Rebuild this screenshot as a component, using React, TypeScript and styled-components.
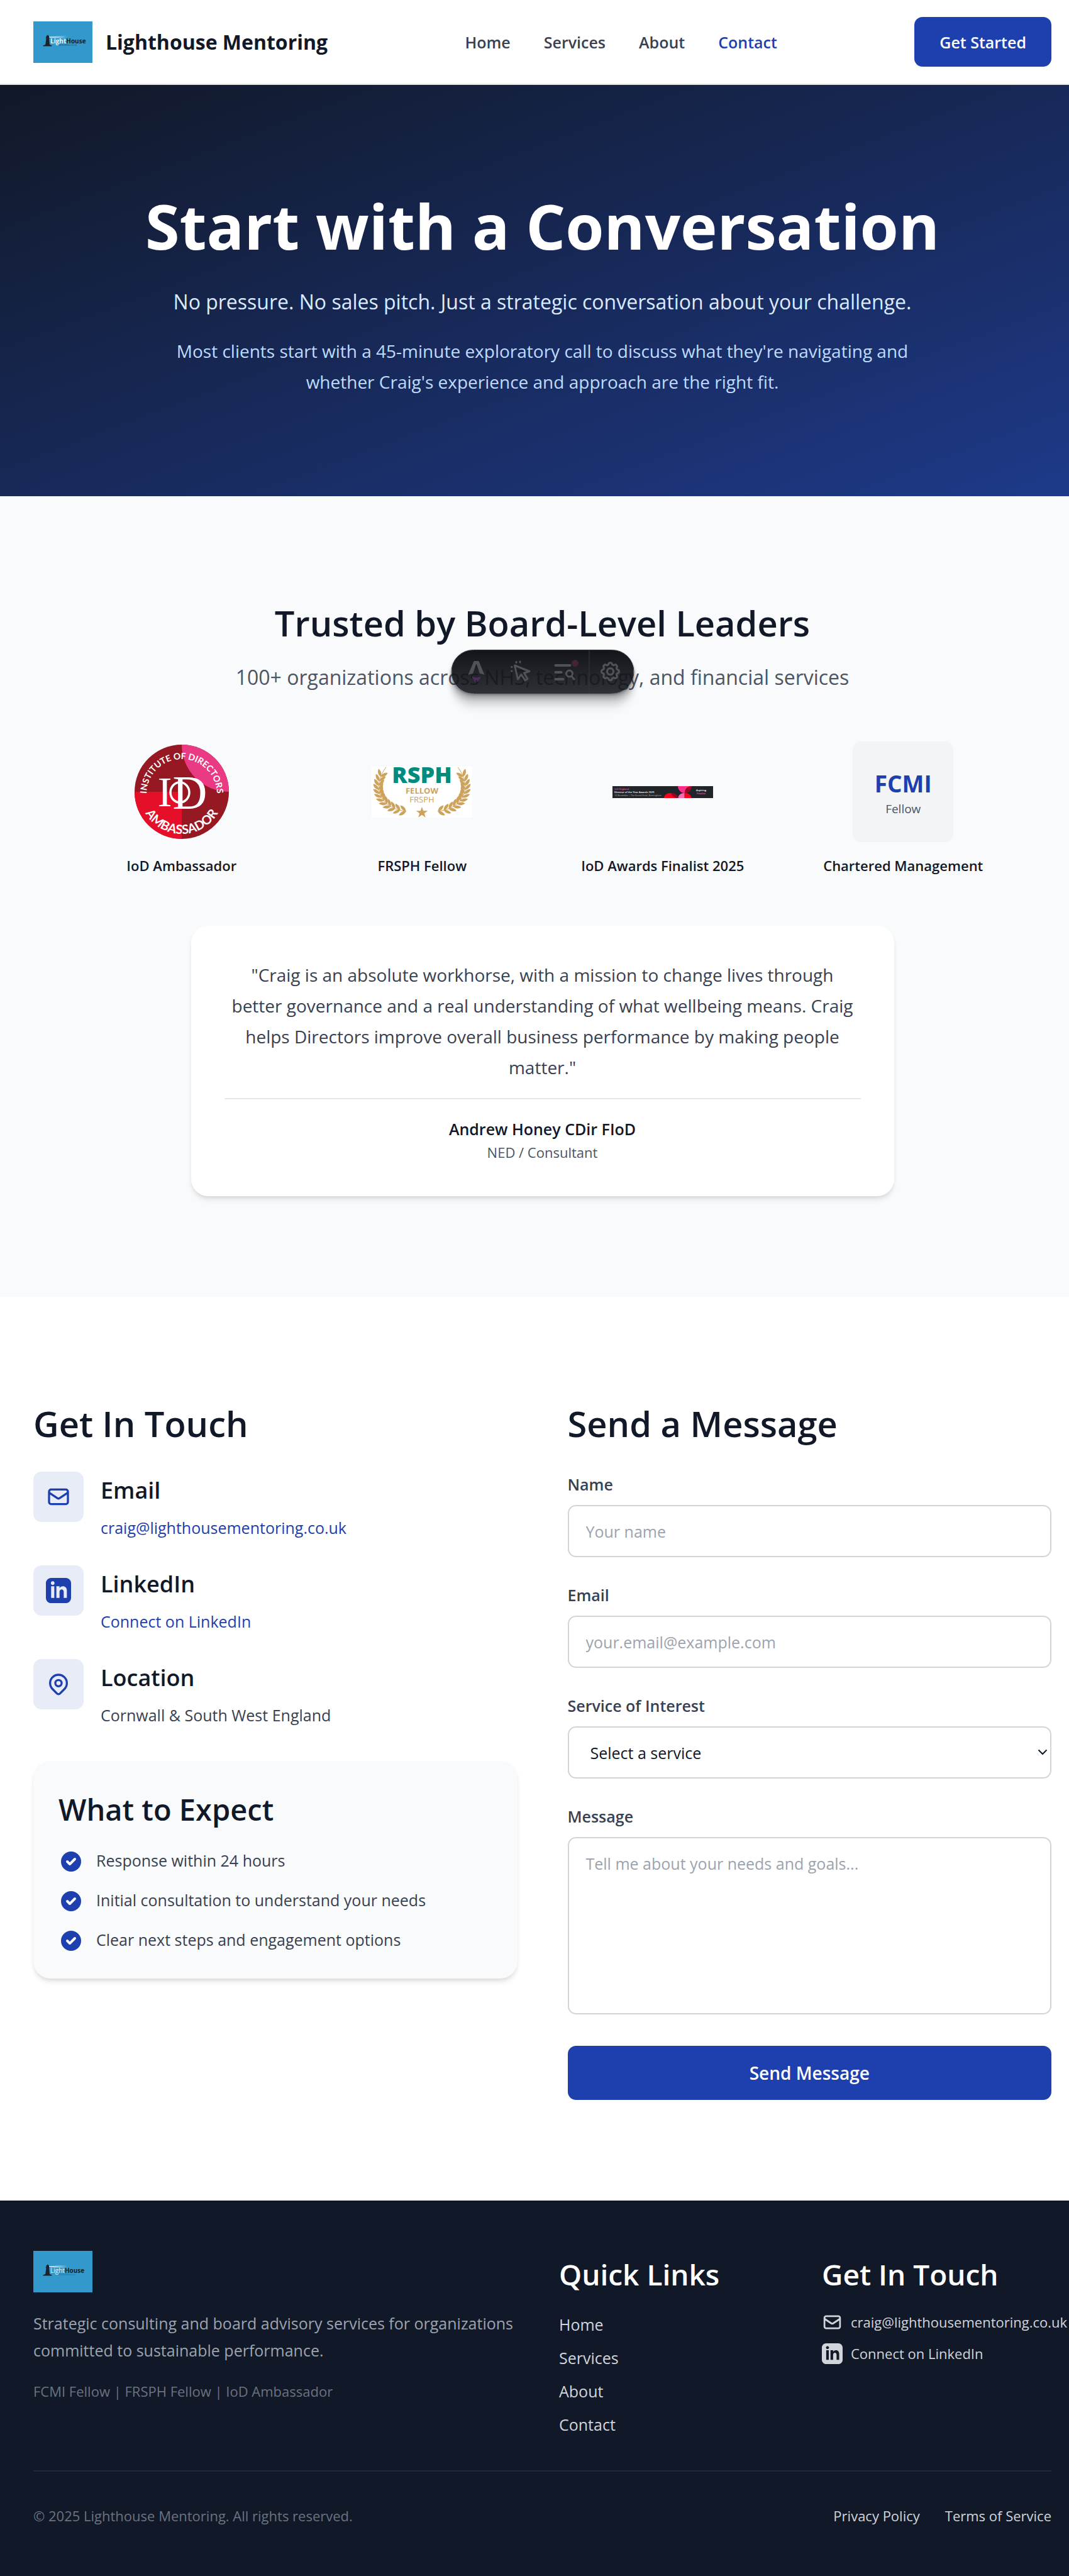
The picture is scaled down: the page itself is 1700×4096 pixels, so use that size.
import React from "react";
import styled, { createGlobalStyle } from "styled-components";

const c = {
  ink: "#111827",
  slate: "#374151",
  muted: "#4b5563",
  line: "#e5e7eb",
  field: "#d1d5db",
  hint: "#9ca3af",
  dim: "#6b7280",
  brand: "#1e40af",
  tint: "#e8ecf7",
  soft: "#f9fafb",
  gold: "#cda25a",
};

const font = `"Open Sans", "Segoe UI", sans-serif`;
const cardShadow = "0 7px 10px -2px rgba(0,0,0,0.1), 0 3px 7px -3px rgba(0,0,0,0.1)";

const GlobalStyle = createGlobalStyle`
  *, *::before, *::after { box-sizing: border-box; }
  html { overflow-x: hidden; }
  body { margin: 0; overflow-x: hidden; background: #fff; color: ${c.ink}; font-family: ${font}; font-size: 25px; line-height: 40px; }
  h1, h2, h3, p, ul, figure, blockquote { margin: 0; padding: 0; }
  ul { list-style: none; }
  a { color: inherit; text-decoration: none; }
  button, input, select, textarea { font: inherit; }
  svg { display: block; flex-shrink: 0; overflow: visible; }
`;

const Band = styled.div`
  padding-left: 53px;
  padding-right: 28px;
`;

/* Header */
const Header = styled(Band).attrs({ as: "header" })`
  display: flex;
  align-items: center;
  justify-content: space-between;
  padding-top: 27px;
  padding-bottom: 27px;
  border-bottom: 2px solid ${c.line};
`;
const Brand = styled.a`
  display: flex;
  align-items: center;
  gap: 21px;
  font-size: 32px;
  font-weight: 700;
`;
const Nav = styled.nav`
  display: flex;
  gap: 53px;
`;
const NavLink = styled.a<{ $active?: boolean }>`
  font-weight: 600;
  color: ${(p) => (p.$active ? c.brand : c.slate)};
`;
const Cta = styled.button`
  height: 79px;
  padding: 0 40px;
  border: 0;
  border-radius: 13px;
  background: ${c.brand};
  color: #fff;
  font-weight: 600;
`;

/* Hero */
const Hero = styled(Band).attrs({ as: "section" })`
  padding-top: 160px;
  padding-bottom: 157px;
  text-align: center;
  background: linear-gradient(to bottom right, ${c.ink}, #1e3a8a) 0 0 / calc(100% + 25px) 100%;
`;
const HeroTitle = styled.h1`
  font-size: 99px;
  line-height: 128px;
  font-weight: 700;
  color: #fff;
`;
const HeroLead = styled.p`
  margin-top: 33px;
  font-size: 32px;
  line-height: 48px;
  color: #dbeafe;
`;
const HeroText = styled.p`
  max-width: 1277px;
  margin: 30px auto 0;
  font-size: 28px;
  line-height: 49px;
  color: #bfdbfe;
`;

/* Trust section */
const Trust = styled(Band).attrs({ as: "section" })`
  padding-top: 159px;
  padding-bottom: 160px;
  background: ${c.soft};
`;
const TrustHead = styled.div`
  position: relative;
  text-align: center;
`;
const SectionTitle = styled.h2`
  font-size: 56px;
  line-height: 84px;
  font-weight: 600;
`;
const TrustLead = styled.p`
  margin-top: 21px;
  font-size: 32px;
  line-height: 48px;
  color: ${c.muted};
`;
const Toolbar = styled.div`
  position: absolute;
  top: 85px;
  left: 50%;
  transform: translateX(-50%);
  display: grid;
  grid-template-columns: 71px 71px 72px 67px;
  width: 291px;
  height: 70px;
  padding: 0 4px;
  border: 1px solid #343841;
  border-radius: 35px;
  background: linear-gradient(180deg, #13151a 0%, rgba(19, 21, 26, 0.88) 100%);
  box-shadow: 0 2px 3px rgba(19, 21, 26, 0.29), 0 7px 7px rgba(19, 21, 26, 0.26),
    0 17px 10px rgba(19, 21, 26, 0.15), 0 28px 12px rgba(19, 21, 26, 0.04);
`;
const Tool = styled.button<{ $divided?: boolean }>`
  display: grid;
  place-items: center;
  padding: 0;
  border: 0;
  border-left: ${(p) => (p.$divided ? "1px solid #343841" : "0")};
  background: none;
  color: #505257;
`;
const Badges = styled.div`
  display: grid;
  grid-template-columns: repeat(4, 1fr);
  gap: 40px;
  max-width: 1490px;
  margin: 78px auto 0;
`;
const Badge = styled.figure`
  display: flex;
  flex-direction: column;
  align-items: center;
  gap: 21px;
`;
const BadgeArt = styled.div`
  display: grid;
  place-items: center;
  width: 160px;
  height: 160px;
`;
const BadgeName = styled.figcaption`
  font-size: 22px;
  line-height: 32px;
  font-weight: 600;
  white-space: nowrap;
`;
const Fcmi = styled(BadgeArt)`
  align-content: center;
  border-radius: 13px;
  background: #f3f4f6;
`;
const FcmiName = styled.strong`
  font-size: 37px;
  line-height: 54px;
  font-weight: 700;
  color: ${c.brand};
`;
const FcmiRole = styled.span`
  font-size: 19px;
  line-height: 27px;
  color: ${c.muted};
`;
const Quote = styled.figure`
  max-width: 1118px;
  margin: 80px auto 0;
  padding: 54px 53px 53px;
  border-radius: 27px;
  background: #fff;
  text-align: center;
  box-shadow: ${cardShadow};
`;
const QuoteText = styled.blockquote`
  margin: 0;
  font-size: 28px;
  line-height: 49px;
  color: ${c.slate};
`;
const QuoteBy = styled.figcaption`
  display: flex;
  flex-direction: column;
  margin-top: 24px;
  padding-top: 27px;
  border-top: 2px solid ${c.line};
`;
const QuoteName = styled.span`
  font-weight: 600;
`;
const QuoteRole = styled.span`
  font-size: 22px;
  line-height: 34px;
  color: ${c.muted};
`;

/* Contact section */
const Contact = styled(Band).attrs({ as: "section" })`
  display: grid;
  grid-template-columns: repeat(2, 1fr);
  gap: 80px;
  padding-top: 159px;
  padding-bottom: 160px;
`;
const Stack = styled.div`
  display: flex;
  flex-direction: column;
  gap: 35px;
`;
const Methods = styled.div`
  display: flex;
  flex-direction: column;
  gap: 38px;
`;
const Method = styled.div`
  display: flex;
  gap: 27px;
`;
const MethodIcon = styled.div`
  display: grid;
  place-items: center;
  width: 80px;
  height: 80px;
  border-radius: 13px;
  background: ${c.tint};
  color: ${c.brand};
`;
const MethodTitle = styled.h3`
  margin-bottom: 8px;
  font-size: 36px;
  line-height: 60px;
  font-weight: 600;
`;
const MethodText = styled.p`
  line-height: 43px;
  color: ${c.slate};
`;
const MethodLink = styled.a`
  display: block;
  line-height: 43px;
  color: ${c.brand};
`;
const Expect = styled.div`
  margin-top: 16px;
  padding: 40px;
  border-radius: 27px;
  background: ${c.soft};
  box-shadow: ${cardShadow};
`;
const ExpectTitle = styled.h3`
  font-size: 47px;
  line-height: 74px;
  font-weight: 600;
`;
const ExpectList = styled.ul`
  display: flex;
  flex-direction: column;
  gap: 20px;
  margin-top: 23px;
`;
const ExpectItem = styled.li`
  display: flex;
  align-items: flex-end;
  gap: 20px;
  line-height: 43px;
  color: ${c.slate};
`;
const Form = styled.form`
  display: flex;
  flex-direction: column;
  gap: 40px;
`;
const Field = styled.div`
  display: flex;
  flex-direction: column;
  gap: 13px;
`;
const Label = styled.label`
  font-weight: 600;
  color: ${c.slate};
`;
const control = `
  width: 100%;
  margin: 0;
  border: 2px solid ${c.field};
  border-radius: 13px;
  background: #fff;
  color: ${c.ink};
  outline: none;
  &::placeholder { color: ${c.hint}; opacity: 1; }
`;
const Input = styled.input`
  ${control}
  height: 83px;
  padding: 0 27px;
`;
const Area = styled.textarea`
  ${control}
  height: 282px;
  padding: 20px 27px;
  resize: none;
`;
const SelectWrap = styled.div`
  position: relative;
  & > svg { position: absolute; right: 6px; top: 34px; pointer-events: none; }
`;
const Select = styled.select`
  ${control}
  display: block;
  appearance: none;
  height: 83px;
  padding: 0 34px;
`;
const Submit = styled.button`
  height: 86px;
  margin-top: 10px;
  border: 0;
  border-radius: 13px;
  background: ${c.brand};
  color: #fff;
  font-size: 28px;
  font-weight: 600;
`;

/* Footer */
const Footer = styled(Band).attrs({ as: "footer" })`
  padding-top: 80px;
  padding-bottom: 80px;
  background: ${c.ink};
`;
const FooterGrid = styled.div`
  display: grid;
  grid-template-columns: repeat(4, minmax(0, 1fr));
  gap: 53px;
  & > :first-child { grid-column: span 2; }
`;
const About = styled.p`
  margin-top: 28px;
  line-height: 43px;
  color: ${c.hint};
`;
const Creds = styled.p`
  margin-top: 25px;
  font-size: 22px;
  line-height: 36px;
  color: ${c.dim};
`;
const FooterTitle = styled.h3`
  font-size: 46px;
  line-height: 74px;
  font-weight: 600;
  color: #fff;
`;
const LinkList = styled.ul<{ $gap: number }>`
  display: flex;
  flex-direction: column;
  gap: ${(p) => p.$gap}px;
  margin-top: 23px;
  color: ${c.field};
`;
const IconLink = styled.a`
  display: flex;
  align-items: center;
  gap: 13px;
  font-size: 22px;
  line-height: 33px;
  white-space: nowrap;
`;
const Legal = styled.div`
  display: flex;
  justify-content: space-between;
  margin-top: 53px;
  padding-top: 54px;
  border-top: 2px solid #1f2937;
  font-size: 22px;
  line-height: 32px;
  color: ${c.dim};
`;
const LegalLinks = styled.div`
  display: flex;
  gap: 40px;
  color: ${c.field};
`;

/* Icons */
const MailIcon = ({ size }: { size: number }) => (
  <svg width={size} height={size} viewBox="0 0 24 24" fill="none" stroke="currentColor" strokeWidth="2" strokeLinecap="round" strokeLinejoin="round" aria-hidden>
    <path d="M3 8l7.89 5.26a2 2 0 002.22 0L21 8M5 19h14a2 2 0 002-2V7a2 2 0 00-2-2H5a2 2 0 00-2 2v10a2 2 0 002 2z" />
  </svg>
);
const LinkedInIcon = ({ size }: { size: number }) => (
  <svg width={size} height={size} viewBox="0 0 24 24" fill="currentColor" aria-hidden>
    <path d="M19 0h-14c-2.761 0-5 2.239-5 5v14c0 2.761 2.239 5 5 5h14c2.762 0 5-2.239 5-5v-14c0-2.761-2.238-5-5-5zm-11 19h-3v-11h3v11zm-1.5-12.268c-.966 0-1.75-.79-1.75-1.764s.784-1.764 1.75-1.764 1.75.79 1.75 1.764-.783 1.764-1.75 1.764zm13.5 12.268h-3v-5.604c0-3.368-4-3.113-4 0v5.604h-3v-11h3v1.765c1.396-2.586 7-2.777 7 2.476v6.759z" />
  </svg>
);
const PinIcon = () => (
  <svg width="40" height="40" viewBox="0 0 24 24" fill="none" stroke="currentColor" strokeWidth="2" strokeLinecap="round" strokeLinejoin="round" aria-hidden>
    <path d="M17.657 16.657L13.414 20.9a1.998 1.998 0 01-2.827 0l-4.244-4.243a8 8 0 1111.314 0z" />
    <path d="M15 11a3 3 0 11-6 0 3 3 0 016 0z" />
  </svg>
);
const CheckIcon = () => (
  <svg width="40" height="40" viewBox="0 0 20 20" fill={c.brand} aria-hidden>
    <path fillRule="evenodd" clipRule="evenodd" d="M10 18a8 8 0 100-16 8 8 0 000 16zm3.707-9.293a1 1 0 00-1.414-1.414L9 10.586 7.707 9.293a1 1 0 00-1.414 1.414l2 2a1 1 0 001.414 0l4-4z" />
  </svg>
);
const ChevronIcon = () => (
  <svg width="16" height="14" viewBox="0 0 16 14" fill="none" stroke={c.ink} strokeWidth="2" aria-hidden>
    <path d="M1.500 3.500 8 10l6.500-6.500" />
  </svg>
);

/* Drawings */
const Logo = () => (
  <svg width="94" height="66" viewBox="0 0 94 66" role="img" aria-label="Lighthouse Mentoring logo">
    <defs>
      <linearGradient id="beam" x1="0" x2="1">
        <stop offset="0" stopColor="#fff" stopOpacity="0.9" />
        <stop offset="1" stopColor="#fff" stopOpacity="0" />
      </linearGradient>
    </defs>
    <rect width="94" height="66" fill="#3399cc" />
    <path d="M25 24.500 54 22.500v5L25 25.800z" fill="url(#beam)" />
    <path d="M15.500 39.500v-1.200l3.700-1.300L20.500 27h-.8v-1.200h.8v-2.300l2.300-2 2.200 2v2.300h.8V27H25l1 10 3.500 1.300v1.200z" fill="#1c2227" />
    <text y="35" x="27" fontFamily="Open Sans, sans-serif" fontSize="10" fill="#e8f4fb">
      Light<tspan fill="#1c2227" fontWeight="700">House</tspan>
    </text>
    <text x="40" y="39" fontFamily="Open Sans, sans-serif" fontSize="3" fill="#1f6a94">MENTORING.CO.UK</text>
  </svg>
);

const IodBadge = () => (
  <svg width="150" height="150" viewBox="0 0 150 150" role="img" aria-label="Institute of Directors Ambassador">
    <defs>
      <clipPath id="disc"><circle cx="75" cy="75" r="75" /></clipPath>
      <path id="arcTop" d="M19 79a56 56 0 0 1 112 0" />
      <path id="arcBottom" d="M8 75a67 67 0 0 0 134 0" />
    </defs>
    <g clipPath="url(#disc)">
      <rect width="150" height="150" fill="#951822" />
      <rect y="75" width="75" height="75" fill="#e50f29" />
      <circle cx="150" cy="0" r="75" fill="#ea3a83" />
    </g>
    <g fill="#fff" fontFamily="Lato, sans-serif" textAnchor="middle">
      <text fontSize="14" fontWeight="700"><textPath href="#arcTop" startOffset="50%">INSTITUTE OF DIRECTORS</textPath></text>
      <text fontSize="20" fontWeight="700"><textPath href="#arcBottom" startOffset="50%">AMBASSADOR</textPath></text>
      <text x="48" y="98" fontFamily="Liberation Serif, serif" fontSize="68">I</text>
      <text x="88" y="102" fontFamily="Liberation Serif, serif" fontSize="76">D</text>
    </g>
    <ellipse cx="72" cy="76" rx="15" ry="16" fill="none" stroke="#fff" strokeWidth="3.500" />
  </svg>
);

const leafPoints = Array.from({ length: 12 }, (_, i) => {
  const t = 0.14 + (i / 11) * 0.84;
  const u = 1 - t;
  const p = [[23, 1], [-1, 32], [12, 66], [55, 71]];
  const w = [u * u * u, 3 * u * u * t, 3 * u * t * t, t * t * t];
  const x = w.reduce((s, k, n) => s + k * p[n][0], 0);
  const y = w.reduce((s, k, n) => s + k * p[n][1], 0);
  const dx = 3 * (u * u * (p[1][0] - p[0][0]) + 2 * u * t * (p[2][0] - p[1][0]) + t * t * (p[3][0] - p[2][0]));
  const dy = 3 * (u * u * (p[1][1] - p[0][1]) + 2 * u * t * (p[2][1] - p[1][1]) + t * t * (p[3][1] - p[2][1]));
  return { x, y, a: (Math.atan2(dy, dx) * 180) / Math.PI };
});
const Laurel = () => (
  <g fill={c.gold}>
    <path d="M23 1C-1 32 12 66 55 71" fill="none" stroke={c.gold} strokeWidth="1" />
    {leafPoints.map((l, i) => (
      <g key={i} transform={`translate(${l.x} ${l.y}) rotate(${l.a})`}>
        <path d="M2 0C1-5-3-8-8-8-7-3-3 0 2 0z" />
        <path d="M2 0C1 5-3 8-8 8-7 3-3 0 2 0z" />
      </g>
    ))}
  </g>
);
const RsphBadge = () => (
  <svg width="160" height="81" viewBox="0 0 160 81" role="img" aria-label="RSPH Fellow FRSPH">
    <rect width="160" height="81" fill="#fff" />
    <Laurel />
    <g transform="translate(160 0) scale(-1 1)"><Laurel /></g>
    <g fontFamily="Open Sans, sans-serif" textAnchor="middle">
      <text x="80" y="26" fontSize="36" fontWeight="800" fill="#008c7d">RSPH</text>
      <text x="80" y="43" fontSize="13" fontWeight="700" fill={c.gold}>FELLOW</text>
      <text x="80" y="57" fontSize="13" fill={c.gold}>FRSPH</text>
    </g>
    <path d="m80 64 2.300 6.200h6.900l-5.400 4 2 6.500-5.800-3.900-5.800 3.900 2-6.500-5.400-4h6.900z" fill={c.gold} />
  </svg>
);

const AwardBanner = () => (
  <svg width="160" height="19" viewBox="0 0 160 19" role="img" aria-label="IoD England Director of the Year Awards 2025">
    <rect width="160" height="19" fill="#212529" />
    <path d="M104 0h21.500c0 6-5 11-10.800 11S104 6 104 0z" fill="#ff2f87" />
    <path d="M125.500 0c0 6-5 11-10.800 11 0-6 4-11 10.800-11z" fill="#9c0325" />
    <path d="M82 19c0-4.500 4-8 10.500-8S104 14.500 104 19z" fill="#f5061f" />
    <path d="M93 11c6.500 0 11 3.500 11 8-6 0-10-4-11-8z" fill="#9c0325" />
    <path d="M104.500 19c0-4.500 4-8 10.200-8v8z" fill="#ff69b4" />
    <path d="M114.700 11c6.500 0 10.800 3.500 10.800 8h-10.800z" fill="#f5061f" />
    <g fontFamily="Open Sans, sans-serif" fontWeight="600">
      <text x="3" y="6" fontSize="4" fill="#e0479a">IoD England</text>
      <text x="3" y="11" fontSize="4" fill="#fff">Director of the Year Awards 2025</text>
      <text x="3" y="16" fontSize="3.500" fontWeight="400" fill="#b9bbbd">14 November | The Grand Hotel, Birmingham</text>
      <text x="141" y="8" fontSize="4" fill="#fff" textAnchor="middle">Aspiring</text>
      <text x="141" y="13" fontSize="4" fill="#ff5aa5" textAnchor="middle">Finalist</text>
    </g>
  </svg>
);

const AstroIcon = () => (
  <svg width="26" height="34" viewBox="0 0 26 34" aria-hidden>
    <path d="M0 22 8.800.800Q9.200 0 10 0h6q.8 0 1.200.8L26 22q-3.600-1.400-7.600-2L13.700 5.800q-.7-1.400-1.400 0L7.600 20Q3.600 20.600 0 22z" fill="currentColor" />
    <path d="M6.500 24.500c3.500 2.500 9.500 2.500 13 0 .6 3-.8 4.700-2.600 6-.9.700-1.300 1.500-1.200 3-1.700-.8-2.200-2.200-1.900-3.800-1.800.6-2 2-1.800 4.300-2-1-2.700-2.500-2.600-4C7.500 29 6 27 6.500 24.500z" fill="#4d2d5c" />
  </svg>
);
const CursorIcon = () => (
  <svg width="34" height="34" viewBox="0 0 34 34" fill="none" stroke="currentColor" strokeWidth="3" strokeLinejoin="round" strokeLinecap="round" aria-hidden>
    <path d="M7 7l5 22 5.500-7.500 6 9.500 4-2.500-5.500-9.500 8.500-2.500z" />
    <path d="M9.500 1.500v1M15.500 1v1M2 9.500h.5M2 16h.5" />
  </svg>
);
const AuditIcon = () => (
  <svg width="40" height="34" viewBox="0 0 40 34" fill="none" stroke="currentColor" strokeWidth="4" aria-hidden>
    <path d="M3 7h23M3 18h9M3 29h12" strokeLinecap="round" />
    <circle cx="25" cy="20" r="5" strokeWidth="3" />
    <path d="m28.500 24 4 5" strokeWidth="3" strokeLinecap="round" />
    <circle cx="34" cy="3.500" r="5.500" fill="#45232f" stroke="none" />
  </svg>
);
const GearIcon = () => (
  <svg width="38" height="38" viewBox="0 0 24 24" fill="none" stroke="currentColor" strokeWidth="2" strokeLinejoin="round" aria-hidden>
    <path d="M10.300 3.200c.5-1.600 2.900-1.600 3.400 0 .3 1.100 1.500 1.600 2.500 1 1.500-.8 3.200.9 2.400 2.400-.6 1-.1 2.200 1 2.500 1.600.5 1.600 2.900 0 3.400-1.100.3-1.600 1.500-1 2.500.8 1.500-.9 3.200-2.400 2.400-1-.6-2.200-.1-2.500 1-.5 1.600-2.900 1.600-3.400 0-.3-1.100-1.500-1.600-2.500-1-1.500.8-3.200-.9-2.400-2.400.6-1 .1-2.200-1-2.500-1.600-.5-1.600-2.900 0-3.400 1.100-.3 1.600-1.500 1-2.500-.8-1.500.9-3.200 2.400-2.400 1 .6 2.200.1 2.500-1z" transform="translate(0 1)" />
    <circle cx="12" cy="11.800" r="3.200" />
  </svg>
);

const navItems = ["Home", "Services", "About", "Contact"];
const steps = [
  "Response within 24 hours",
  "Initial consultation to understand your needs",
  "Clear next steps and engagement options",
];

export default function App() {
  return (
    <>
      <GlobalStyle />
      <Header>
        <Brand href="#"><Logo />Lighthouse Mentoring</Brand>
        <Nav aria-label="Main">
          {navItems.map((n) => (
            <NavLink key={n} href="#" $active={n === "Contact"}>{n}</NavLink>
          ))}
        </Nav>
        <Cta type="button">Get Started</Cta>
      </Header>

      <main>
        <Hero>
          <HeroTitle>Start with a Conversation</HeroTitle>
          <HeroLead>No pressure. No sales pitch. Just a strategic conversation about your challenge.</HeroLead>
          <HeroText>
            Most clients start with a 45-minute exploratory call to discuss what they're navigating and whether
            Craig's experience and approach are the right fit.
          </HeroText>
        </Hero>

        <Trust>
          <TrustHead>
            <SectionTitle>Trusted by Board-Level Leaders</SectionTitle>
            <TrustLead>100+ organizations across NHS, technology, and financial services</TrustLead>
            <Toolbar role="toolbar" aria-label="Developer tools">
              <Tool type="button" aria-label="Menu"><AstroIcon /></Tool>
              <Tool type="button" aria-label="Inspect"><CursorIcon /></Tool>
              <Tool type="button" aria-label="Audit"><AuditIcon /></Tool>
              <Tool type="button" aria-label="Settings" $divided><GearIcon /></Tool>
            </Toolbar>
          </TrustHead>

          <Badges>
            <Badge><BadgeArt><IodBadge /></BadgeArt><BadgeName>IoD Ambassador</BadgeName></Badge>
            <Badge><BadgeArt><RsphBadge /></BadgeArt><BadgeName>FRSPH Fellow</BadgeName></Badge>
            <Badge><BadgeArt><AwardBanner /></BadgeArt><BadgeName>IoD Awards Finalist 2025</BadgeName></Badge>
            <Badge>
              <Fcmi><FcmiName>FCMI</FcmiName><FcmiRole>Fellow</FcmiRole></Fcmi>
              <BadgeName>Chartered Management</BadgeName>
            </Badge>
          </Badges>

          <Quote>
            <QuoteText>
              "Craig is an absolute workhorse, with a mission to change lives through better governance and a real
              understanding of what wellbeing means. Craig helps Directors improve overall business performance by
              making people matter."
            </QuoteText>
            <QuoteBy>
              <QuoteName>Andrew Honey CDir FIoD</QuoteName>
              <QuoteRole>NED / Consultant</QuoteRole>
            </QuoteBy>
          </Quote>
        </Trust>

        <Contact>
          <Stack>
            <SectionTitle>Get In Touch</SectionTitle>
            <Methods>
              <Method>
                <MethodIcon><MailIcon size={40} /></MethodIcon>
                <div>
                  <MethodTitle>Email</MethodTitle>
                  <MethodLink href="mailto:craig@lighthousementoring.co.uk">craig@lighthousementoring.co.uk</MethodLink>
                </div>
              </Method>
              <Method>
                <MethodIcon><LinkedInIcon size={40} /></MethodIcon>
                <div>
                  <MethodTitle>LinkedIn</MethodTitle>
                  <MethodLink href="#">Connect on LinkedIn</MethodLink>
                </div>
              </Method>
              <Method>
                <MethodIcon><PinIcon /></MethodIcon>
                <div>
                  <MethodTitle>Location</MethodTitle>
                  <MethodText>Cornwall &amp; South West England</MethodText>
                </div>
              </Method>
            </Methods>
            <Expect>
              <ExpectTitle>What to Expect</ExpectTitle>
              <ExpectList>
                {steps.map((s) => (
                  <ExpectItem key={s}><CheckIcon />{s}</ExpectItem>
                ))}
              </ExpectList>
            </Expect>
          </Stack>

          <Stack>
            <SectionTitle>Send a Message</SectionTitle>
            <Form>
              <Field>
                <Label htmlFor="name">Name</Label>
                <Input id="name" type="text" placeholder="Your name" />
              </Field>
              <Field>
                <Label htmlFor="email">Email</Label>
                <Input id="email" type="email" placeholder="your.email@example.com" />
              </Field>
              <Field>
                <Label htmlFor="service">Service of Interest</Label>
                <SelectWrap>
                  <Select id="service" defaultValue="">
                    <option value="">Select a service</option>
                  </Select>
                  <ChevronIcon />
                </SelectWrap>
              </Field>
              <Field>
                <Label htmlFor="message">Message</Label>
                <Area id="message" placeholder="Tell me about your needs and goals..." />
              </Field>
              <Submit type="button">Send Message</Submit>
            </Form>
          </Stack>
        </Contact>
      </main>

      <Footer>
        <FooterGrid>
          <div>
            <Logo />
            <About>Strategic consulting and board advisory services for organizations committed to sustainable performance.</About>
            <Creds>FCMI Fellow | FRSPH Fellow | IoD Ambassador</Creds>
          </div>
          <div>
            <FooterTitle>Quick Links</FooterTitle>
            <LinkList $gap={13}>
              {navItems.map((n) => (
                <li key={n}><a href="#">{n}</a></li>
              ))}
            </LinkList>
          </div>
          <div>
            <FooterTitle>Get In Touch</FooterTitle>
            <LinkList $gap={17}>
              <li><IconLink href="mailto:craig@lighthousementoring.co.uk"><MailIcon size={33} />craig@lighthousementoring.co.uk</IconLink></li>
              <li><IconLink href="#"><LinkedInIcon size={33} />Connect on LinkedIn</IconLink></li>
            </LinkList>
          </div>
        </FooterGrid>
        <Legal>
          <p>© 2025 Lighthouse Mentoring. All rights reserved.</p>
          <LegalLinks><a href="#">Privacy Policy</a><a href="#">Terms of Service</a></LegalLinks>
        </Legal>
      </Footer>
    </>
  );
}
